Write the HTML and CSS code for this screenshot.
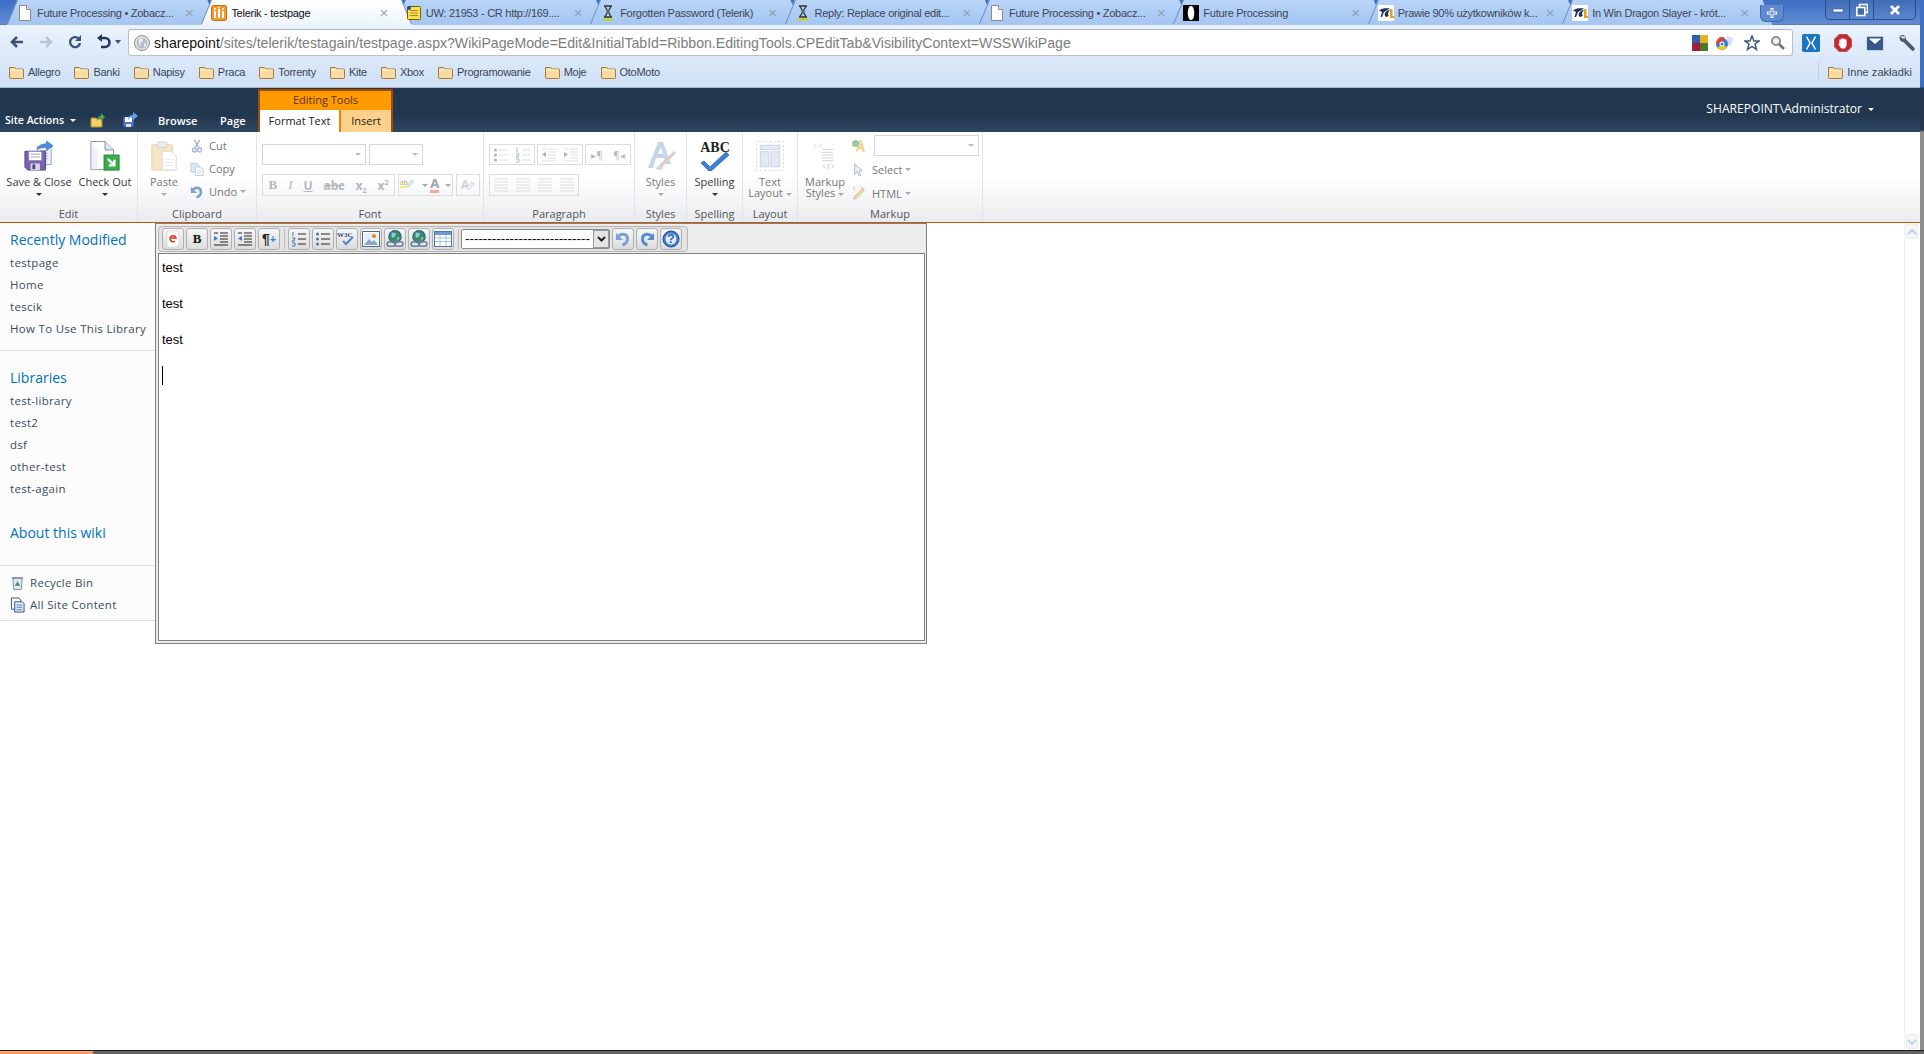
FILE: index.html
```html
<!DOCTYPE html>
<html lang="pl">
<head>
<meta charset="utf-8">
<title>Telerik - testpage</title>
<link rel="stylesheet" href="styles.css">
</head>
<body>
<svg class="defs" aria-hidden="true">
  <symbol id="folder" viewBox="0 0 16 16"><path d="M1.5 3.5h5l1.5 1.5h6.5a1 1 0 0 1 1 1v7.500a1 1 0 0 1-1 1h-12a1 1 0 0 1-1-1z" fill="#f9dba0" stroke="#a57a3e"/><path d="M2 6h12.500" stroke="#fff2d2"/></symbol>
  <symbol id="page" viewBox="0 0 16 16"><path d="M2.500.5h7l4 4v11h-11z" fill="#fff" stroke="#8a8a8a"/><path d="M9.500.5v4h4" fill="#e8e8e8" stroke="#8a8a8a"/></symbol>
  <symbol id="telerik" viewBox="0 0 16 16"><rect x=".5" y=".5" width="15" height="15" rx="2" fill="#f49a2b" stroke="#c96f10"/><path d="M4 6v7M8 4v9M12 6v7" stroke="#fff" stroke-width="2"/><circle cx="4" cy="4" r="1" fill="#fff"/><circle cx="8" cy="2.500" r="1" fill="#fff"/><circle cx="12" cy="4" r="1" fill="#fff"/></symbol>
  <symbol id="note" viewBox="0 0 16 16"><rect x="1.500" y="1.500" width="13" height="13" rx="1" fill="#f8e14a" stroke="#7a5a10"/><path d="M4 5.500h8M4 8h8M4 10.500h8" stroke="#a98b20"/><circle cx="3" cy="3" r="2" fill="#1f4fa0"/></symbol>
  <symbol id="hourglass" viewBox="0 0 16 16"><path d="M4 1h8M4 12h8M5 1.500l6 10M11 1.500l-6 10" stroke="#333" stroke-width="1.300" fill="none"/><path d="M6 6.500l2-2 2 2-2 2z" fill="#666"/><path d="M3 14.500h10" stroke="#c8d400" stroke-width="2"/></symbol>
  <symbol id="halfmoon" viewBox="0 0 16 16"><rect width="16" height="16" fill="#000"/><circle cx="8" cy="8" r="7" fill="#fff"/><path d="M7 1a7 7 0 0 0 0 14c-3-3-3-11 0-14z" fill="#000"/><path d="M9 1a7 7 0 0 1 0 14c3-3 3-11 0-14z" fill="#000"/></symbol>
  <symbol id="pcl" viewBox="0 0 16 16"><rect width="16" height="16" fill="#fff"/><path d="M1 5.500C4 3 8 3 12 3.500L6 7l-2 5H2.500l1.500-5z" fill="#1d3557"/><path d="M7 8c1-2 3-3 5-3l-2 3c0 1 0 2 1 2l-2 2c-2 0-3-2-2-4z" fill="#1d3557"/><path d="M12 4h2.500v7H16v2h-4z" fill="#e8a020"/></symbol>
  <symbol id="globe" viewBox="0 0 16 16"><circle cx="8" cy="8" r="7.500" fill="#e6e6e6" stroke="#8e8e8e"/><circle cx="8" cy="8" r="5.500" fill="#b9bfc6"/><path d="M5 4l3-1 1 3-3 2 1 3-2-1zM10 9l2-1v3l-2 1z" fill="#f0f0f0"/></symbol>
  <symbol id="save" viewBox="0 0 32 32"><rect x="14" y="6" width="15" height="19" fill="#eef3fb" stroke="#8fa6c8"/><path d="M17 10h9M17 13h9M17 16h9M17 19h9" stroke="#9fb4d2"/><path d="M1 11h22v20H4l-3-3z" fill="#7a63ae" stroke="#4f3e85"/><rect x="5" y="11" width="14" height="10" fill="#fff" stroke="#8b7fb5"/><path d="M7 14h10M7 17h10" stroke="#9a9ac0"/><rect x="7" y="24" width="10" height="7" fill="#d8d4e8"/><rect x="9" y="25" width="3" height="5" fill="#4f3e85"/><path d="M14 9c2-5 6-6 10-6V0l7 5-7 5V7c-4 0-7 0-10 2z" fill="#4f8de0" stroke="#2a62b0" stroke-width=".6"/></symbol>
  <symbol id="checkout" viewBox="0 0 32 32"><path d="M1 .5h15l9 9v21H1z" fill="#fff" stroke="#7f8fa8"/><path d="M16 .5v9h9" fill="#dfe6f0" stroke="#7f8fa8"/><path d="M2 2v28h6V10z" fill="#eef2f8"/><rect x="15" y="15" width="16" height="16" fill="#35b04a" stroke="#1f7f30"/><path d="M19 19l7 7m0-6v6h-6" stroke="#fff" stroke-width="2.500" fill="none"/></symbol>
  <symbol id="paste" viewBox="0 0 28 32"><rect x="1" y="4" width="22" height="27" rx="1" fill="#f7e6c6" stroke="#e8d3ab"/><rect x="7" y="1" width="10" height="6" rx="1" fill="#eee" stroke="#cfcfcf"/><path d="M12 11h10l5 5v15H12z" fill="#fff" stroke="#d8d8d8"/><path d="M15 20h9M15 23h9M15 26h9" stroke="#e8e8e8"/></symbol>
  <symbol id="cut" viewBox="0 0 16 16"><path d="M5 1l5 9M11 1L6 10" stroke="#a9b1bd" stroke-width="1.500"/><circle cx="5" cy="12.500" r="2.200" fill="none" stroke="#9db8dc" stroke-width="1.500"/><circle cx="11" cy="12.500" r="2.200" fill="none" stroke="#9db8dc" stroke-width="1.500"/></symbol>
  <symbol id="copy" viewBox="0 0 16 16"><path d="M1 1.500h7l2 2v8H1z" fill="#dfe9f6" stroke="#b5c6dc"/><path d="M6 5.500h6l3 3v7H6z" fill="#fff" stroke="#b5c6dc"/><path d="M8 10h5M8 12.500h5" stroke="#c8d4e4"/></symbol>
  <symbol id="undo" viewBox="0 0 16 16"><path d="M3.500 5c4-3 9-2 9 3 0 3-2 5-5 6" fill="none" stroke="#7aa0d4" stroke-width="3"/><path d="M1 2v7h7z" fill="#7aa0d4"/></symbol>
  <symbol id="redo" viewBox="0 0 16 16"><path d="M12.500 5c-4-3-9-2-9 3 0 3 2 5 5 6" fill="none" stroke="#5b8ad0" stroke-width="3"/><path d="M15 2v7H8z" fill="#5b8ad0"/></symbol>
  <symbol id="styles" viewBox="0 0 32 30"><path d="M3 27L13 1h5l8 22h-5l-2-6h-8l-3 10z" fill="#c5d5ec"/><path d="M13 13h5l-2-7z" fill="#fff"/><path d="M31 12L19 24l-3 5-5-1 5-6 13-12z" fill="#d8cfc0"/><path d="M14 24l4 3-3 2-5-1z" fill="#cfd9e8"/></symbol>
  <symbol id="spell" viewBox="0 0 32 30"><text x="16" y="11" text-anchor="middle" class="abc">ABC</text><path d="M5 20l6 6L27 11l3 3-19 17-9-9z" fill="#3d80d8" stroke="#1f5cae" stroke-width=".7"/></symbol>
  <symbol id="layout" viewBox="0 0 26 28"><rect x=".5" y=".5" width="25" height="27" fill="#fff" stroke="#d5dde8" stroke-dasharray="2 2"/><rect x="4" y="4" width="18" height="4" fill="#e4eaf3" stroke="#cdd7e4"/><rect x="4" y="10" width="8" height="14" fill="#e4eaf3" stroke="#cdd7e4"/><rect x="14" y="10" width="8" height="14" fill="#e4eaf3" stroke="#cdd7e4"/></symbol>
  <symbol id="markup" viewBox="0 0 24 32"><path d="M2 3L0 5l2 2M6 3l2 2-2 2M9 9h12M9 12h12M9 15h12M9 18h12M9 21h12" stroke="#cfd3d9" fill="none"/><path d="M12 25l-2 2 2 2M19 25l2 2-2 2M16.500 24l-2 6" stroke="#c0c5cc" fill="none"/></symbol>
  <symbol id="fonta" viewBox="0 0 16 16"><path d="M4 15L8 1h3l4 14h-3l-1-3H7l-1 3z" fill="#efd999"/><circle cx="4" cy="5" r="4" fill="#9dc3a8"/></symbol>
  <symbol id="cursor" viewBox="0 0 16 16"><path d="M3 1v12l3-3 2 5 2-1-2-5h4z" fill="#eef2f8" stroke="#a8b4c6"/></symbol>
  <symbol id="html" viewBox="0 0 16 16"><path d="M4 1L1 3l3 2M10 1l3 2-3 2" stroke="#c0c5cc" fill="none"/><path d="M14 5L5 14l-3 1 1-3 9-9z" fill="#f2dfa6" stroke="#c8b483"/></symbol>
  <symbol id="orderlist" viewBox="0 0 16 16"><path d="M7 3h8M7 8h8M7 13h8" stroke="currentColor"/><path d="M2 1v4M1 7h3v1l-3 2h3M1 12h3v3H1" stroke="#4a78b8" fill="none"/></symbol>
  <symbol id="bulletlist" viewBox="0 0 16 16"><path d="M6 3h9M6 8h9M6 13h9" stroke="currentColor"/><circle cx="2.500" cy="3" r="1.500" fill="#4a78b8"/><circle cx="2.500" cy="8" r="1.500" fill="#4a78b8"/><circle cx="2.500" cy="13" r="1.500" fill="#4a78b8"/></symbol>
  <symbol id="indent" viewBox="0 0 16 16"><path d="M7 2h8M7 5h8M7 8h8M7 11h8M1 14h14M1 2h4" stroke="currentColor"/><path d="M1 5v5l4-2.500z" fill="#4a78b8"/></symbol>
  <symbol id="outdent" viewBox="0 0 16 16"><path d="M7 2h8M7 5h8M7 8h8M7 11h8M1 14h14M1 2h4" stroke="currentColor"/><path d="M5 5v5L1 7.500z" fill="#4a78b8"/></symbol>
  <symbol id="aligntext" viewBox="0 0 16 16"><path d="M1 2h14M1 5h14M1 8h14M1 11h14M1 14h14" stroke="currentColor"/></symbol>
  <symbol id="globelink" viewBox="0 0 16 16"><circle cx="8" cy="6" r="5.500" fill="#3b8a5a" stroke="#2a5f90"/><path d="M5 2l4 1-1 3-3 1zM10 6l2 1-2 3z" fill="#86c9e8"/><rect x="1" y="10.500" width="7" height="4" rx="2" fill="none" stroke="#6a7f99" stroke-width="1.400"/><rect x="8" y="10.500" width="7" height="4" rx="2" fill="none" stroke="#6a7f99" stroke-width="1.400"/></symbol>
</svg>

<div class="screen">
  <div class="browser">
    <div class="tabstrip">
      <div class="tab"><svg class="fav"><use href="#page"/></svg><span class="tab-title">Future Processing • Zobacz...</span><span class="tab-x">×</span></div>
      <div class="tab active"><svg class="fav"><use href="#telerik"/></svg><span class="tab-title">Telerik - testpage</span><span class="tab-x">×</span></div>
      <div class="tab"><svg class="fav"><use href="#note"/></svg><span class="tab-title">UW: 21953 - CR http://169....</span><span class="tab-x">×</span></div>
      <div class="tab"><svg class="fav"><use href="#hourglass"/></svg><span class="tab-title">Forgotten Password (Telerik)</span><span class="tab-x">×</span></div>
      <div class="tab"><svg class="fav"><use href="#hourglass"/></svg><span class="tab-title">Reply: Replace original edit...</span><span class="tab-x">×</span></div>
      <div class="tab"><svg class="fav"><use href="#page"/></svg><span class="tab-title">Future Processing • Zobacz...</span><span class="tab-x">×</span></div>
      <div class="tab"><svg class="fav"><use href="#halfmoon"/></svg><span class="tab-title">Future Processing</span><span class="tab-x">×</span></div>
      <div class="tab"><svg class="fav"><use href="#pcl"/></svg><span class="tab-title">Prawie 90% użytkowników k...</span><span class="tab-x">×</span></div>
      <div class="tab"><svg class="fav"><use href="#pcl"/></svg><span class="tab-title">In Win Dragon Slayer - krót...</span><span class="tab-x">×</span></div>
      <div class="newtab"><svg width="12" height="12" viewBox="0 0 12 12"><path d="M6 1v10M1 6h10" stroke="#fff" stroke-width="3"/><path d="M6 2v8M2 6h8" stroke="#4a78c0" stroke-width="1"/></svg></div>
      <div class="winctl">
        <span class="win-btn win-min"><svg width="12" height="8" viewBox="0 0 12 8"><rect x="1" y="3" width="10" height="3" fill="#fff" stroke="#33558f" stroke-width=".6"/></svg></span>
        <span class="win-btn win-max"><svg width="12" height="14" viewBox="0 0 12 14"><rect x="3.500" y="1.500" width="8" height="8" fill="none" stroke="#fff" stroke-width="1.600"/><rect x=".8" y="4.500" width="8" height="8" fill="#3f6cb5" stroke="#fff" stroke-width="1.600"/></svg></span>
        <span class="win-btn win-close"><svg width="12" height="12" viewBox="0 0 12 12"><path d="M2 2l8 8M10 2l-8 8" stroke="#fff" stroke-width="2.600"/></svg></span>
      </div>
    </div>

    <div class="toolbar">
      <svg class="nav-ico" viewBox="0 0 16 16"><path d="M14 8H4m4-5L3 8l5 5" fill="none" stroke="#3d5478" stroke-width="2.600"/></svg>
      <svg class="nav-ico" viewBox="0 0 16 16"><path d="M2 8h10M8 3l5 5-5 5" fill="none" stroke="#b8c5d8" stroke-width="2.600"/></svg>
      <svg class="nav-ico" viewBox="0 0 16 16"><path d="M13 9a5 5 0 1 1-1.500-4.500" fill="none" stroke="#3d5478" stroke-width="2.400"/><path d="M14 1v6H8z" fill="#3d5478"/></svg>
      <svg class="nav-ico" viewBox="0 0 16 16"><path d="M4 4h5a4 4 0 0 1 0 9H5" fill="none" stroke="#22385c" stroke-width="2.600"/><path d="M6 0v8L1 4z" fill="#22385c"/></svg>
      <span class="caret-dark"></span>
      <div class="omnibox">
        <svg class="globe-ico"><use href="#globe"/></svg>
        <span class="url"><span class="url-host">sharepoint</span>/sites/telerik/testagain/testpage.aspx?WikiPageMode=Edit&amp;InitialTabId=Ribbon.EditingTools.CPEditTab&amp;VisibilityContext=WSSWikiPage</span>
        <svg class="omni-ico" viewBox="0 0 16 16"><rect width="8" height="8" fill="#2f5fa8"/><rect x="8" width="8" height="8" fill="#eab020"/><rect y="8" width="8" height="8" fill="#a01f3a"/><rect x="8" y="8" width="8" height="8" fill="#4c7a2a"/></svg>
        <svg class="omni-ico omni-wide" viewBox="0 0 20 16"><path d="M13 1l6 2-2 8-5-1z" fill="#cfe0f4"/><circle cx="8" cy="9" r="6" fill="#3a78d0"/><path d="M2 8c1-6 6-7 9-5L7 9z" fill="#d9482e"/><path d="M3 13c3 3 8 3 10-1L8 9z" fill="#e8c030"/><circle cx="8" cy="9" r="2.500" fill="#fff"/><circle cx="8" cy="9" r="1.500" fill="#3a78d0"/></svg>
        <svg class="omni-ico" viewBox="0 0 16 16"><path d="M8 1l2 5h5l-4 3 1.500 5.500L8 11.500 3.500 14.500 5 9 1 6h5z" fill="#fff" stroke="#42597c" stroke-width="1.500"/></svg>
        <svg class="omni-ico" viewBox="0 0 16 16"><circle cx="6" cy="6" r="4" fill="#f4f4f4" stroke="#8a8f96" stroke-width="2"/><path d="M9 9l5 5" stroke="#6d7277" stroke-width="2.500"/></svg>
      </div>
      <svg class="ext-ico" viewBox="0 0 20 20"><rect width="20" height="20" rx="2" fill="#1a74c4"/><path d="M5 3l4 7-4 7M15 3l-4 7 4 7" fill="none" stroke="#fff" stroke-width="1.600"/></svg>
      <svg class="ext-ico" viewBox="0 0 20 20"><path d="M6 0h8l6 6v8l-6 6H6l-6-6V6z" fill="#c9282d" stroke="#8a8f96"/><path d="M6 9V6h2v3-4h2v4-4h2v4-3h2v7l-2 3H8l-3-4z" fill="#fff"/></svg>
      <svg class="ext-ico" viewBox="0 0 20 20"><rect x="1" y="3" width="18" height="15" fill="#37598a"/><path d="M3 5h14l-7 6z" fill="#fff"/></svg>
      <svg class="ext-ico" viewBox="0 0 20 20"><path d="M2 2c4-2 7 0 7 4l9 9a2 2 0 0 1-3 3L6 9C3 9 1 6 2 2l3 3h3V3z" fill="#4d5d74"/></svg>
    </div>

    <div class="bookmarks">
      <span class="bm"><svg class="folder"><use href="#folder"/></svg>Allegro</span>
      <span class="bm"><svg class="folder"><use href="#folder"/></svg>Banki</span>
      <span class="bm"><svg class="folder"><use href="#folder"/></svg>Napisy</span>
      <span class="bm"><svg class="folder"><use href="#folder"/></svg>Praca</span>
      <span class="bm"><svg class="folder"><use href="#folder"/></svg>Torrenty</span>
      <span class="bm"><svg class="folder"><use href="#folder"/></svg>Kite</span>
      <span class="bm"><svg class="folder"><use href="#folder"/></svg>Xbox</span>
      <span class="bm"><svg class="folder"><use href="#folder"/></svg>Programowanie</span>
      <span class="bm"><svg class="folder"><use href="#folder"/></svg>Moje</span>
      <span class="bm"><svg class="folder"><use href="#folder"/></svg>OtoMoto</span>
      <span class="bm bm-other"><svg class="folder"><use href="#folder"/></svg>Inne zakładki</span>
    </div>

    <div class="topbar">
      <span class="site-actions">Site Actions<i class="caret-white"></i></span>
      <svg class="top-ico" viewBox="0 0 16 16"><path d="M1 6h5l1 1h5v8H1z" fill="#f2cf68" stroke="#a98a30"/><path d="M7 9c0-4 2-5 4-5V1l4 4-4 4V6c-2 0-3 1-4 3z" fill="#4da64a"/></svg>
      <svg class="top-ico ico2" viewBox="0 0 16 16"><path d="M1 5h11v10H1z" fill="#5a6fd0" stroke="#2f3f98"/><rect x="3" y="5" width="7" height="5" fill="#fff"/><rect x="4" y="12" width="5" height="3" fill="#dfe4f8"/><path d="M6 8c0-4 3-5 5-5V0l5 4-5 4V5c-2 0-4 1-5 3z" fill="#5ba3e8"/></svg>
      <span class="toptab tab-browse">Browse</span>
      <span class="toptab tab-page">Page</span>
      <div class="ctx">
        <div class="ctx-head">Editing Tools</div>
        <div class="ctx-tabs"><span class="ctx-format">Format Text</span><span class="ctx-insert">Insert</span></div>
      </div>
      <span class="user">SHAREPOINT\Administrator<i class="caret-white"></i></span>
    </div>

    <div class="ribbon">
      <section class="group g-edit">
        <div class="g-body">
          <div class="large lg-save"><svg class="lg-ico i32"><use href="#save"/></svg><span class="lg-text">Save &amp; Close</span><i class="caret"></i></div>
          <div class="large lg-check"><svg class="lg-ico i32"><use href="#checkout"/></svg><span class="lg-text">Check Out</span><i class="caret"></i></div>
        </div>
        <div class="g-label">Edit</div>
      </section>
      <section class="group g-clip">
        <div class="g-body">
          <div class="large lg-paste off"><svg class="lg-ico i28"><use href="#paste"/></svg><span class="lg-text">Paste</span><i class="caret"></i></div>
          <div class="smalls off">
            <div class="small"><svg class="sm-ico"><use href="#cut"/></svg>Cut</div>
            <div class="small"><svg class="sm-ico"><use href="#copy"/></svg>Copy</div>
            <div class="small"><svg class="sm-ico"><use href="#undo"/></svg>Undo<i class="caret sm-caret"></i></div>
          </div>
        </div>
        <div class="g-label">Clipboard</div>
      </section>
      <section class="group g-font">
        <div class="g-body rows">
          <div class="row">
            <div class="combo cb-font"><i class="caret"></i></div>
            <div class="combo cb-size"><i class="caret"></i></div>
          </div>
          <div class="row">
            <div class="btns b-format">
              <b class="fb serif">B</b><i class="fb serif">I</i><u class="fb">U</u><s class="fb">abc</s><span class="fb">x<sub>2</sub></span><span class="fb">x<sup>2</sup></span>
            </div>
            <div class="btns b-color">
              <svg class="tool" viewBox="0 0 22 18"><text x="0" y="9" class="mini">ab</text><path d="M16 2l3 2-6 7-3 1 1-3z" fill="#eef2f8" stroke="#b5c0d0"/><rect y="11" width="9" height="2" fill="#f1e84a"/></svg><i class="caret sm-caret"></i>
              <span class="colora">A</span><i class="caret sm-caret"></i>
            </div>
            <div class="btns b-clear"><svg class="tool" viewBox="0 0 18 18"><text x="1" y="13" class="letter">A</text><path d="M16 8l-6 6-3-2 6-6z" fill="#f4f4f4" stroke="#c5ccd8"/></svg></div>
          </div>
        </div>
        <div class="g-label">Font</div>
      </section>
      <section class="group g-para">
        <div class="g-body rows">
          <div class="row">
            <div class="btns b-list"><svg class="tool"><use href="#bulletlist"/></svg><svg class="tool"><use href="#orderlist"/></svg></div>
            <div class="btns b-list"><svg class="tool"><use href="#outdent"/></svg><svg class="tool"><use href="#indent"/></svg></div>
            <div class="btns b-list"><span class="pil">▸¶</span><span class="pil">¶◂</span></div>
          </div>
          <div class="row">
            <div class="btns b-align"><svg class="tool"><use href="#aligntext"/></svg><svg class="tool"><use href="#aligntext"/></svg><svg class="tool"><use href="#aligntext"/></svg><svg class="tool"><use href="#aligntext"/></svg></div>
          </div>
        </div>
        <div class="g-label">Paragraph</div>
      </section>
      <section class="group g-styles">
        <div class="g-body"><div class="large lg-full off"><svg class="lg-ico i32"><use href="#styles"/></svg><span class="lg-text">Styles</span><i class="caret"></i></div></div>
        <div class="g-label">Styles</div>
      </section>
      <section class="group g-spell">
        <div class="g-body"><div class="large lg-full"><svg class="lg-ico i32"><use href="#spell"/></svg><span class="lg-text">Spelling</span><i class="caret"></i></div></div>
        <div class="g-label">Spelling</div>
      </section>
      <section class="group g-layout">
        <div class="g-body"><div class="large lg-full off"><svg class="lg-ico i28"><use href="#layout"/></svg><span class="lg-text two">Text<br>Layout<i class="caret sm-caret"></i></span></div></div>
        <div class="g-label">Layout</div>
      </section>
      <section class="group g-markup">
        <div class="g-body">
          <div class="large lg-markup off"><svg class="lg-ico i28"><use href="#markup"/></svg><span class="lg-text two">Markup<br>Styles<i class="caret sm-caret"></i></span></div>
          <div class="smalls mk off">
            <div class="small"><svg class="sm-ico"><use href="#fonta"/></svg><div class="combo cb-lang"><i class="caret"></i></div></div>
            <div class="small"><svg class="sm-ico"><use href="#cursor"/></svg>Select<i class="caret sm-caret"></i></div>
            <div class="small"><svg class="sm-ico"><use href="#html"/></svg>HTML<i class="caret sm-caret"></i></div>
          </div>
        </div>
        <div class="g-label">Markup</div>
      </section>
    </div>

    <div class="content">
      <nav class="nav">
        <div class="nav-sec sec-recent">
          <a class="nav-head">Recently Modified</a>
          <a class="nav-item">testpage</a><a class="nav-item">Home</a><a class="nav-item">tescik</a><a class="nav-item">How To Use This Library</a>
        </div>
        <div class="nav-sec sec-libs">
          <a class="nav-head">Libraries</a>
          <a class="nav-item">test-library</a><a class="nav-item">test2</a><a class="nav-item">dsf</a><a class="nav-item">other-test</a><a class="nav-item">test-again</a>
          <a class="nav-head about">About this wiki</a>
        </div>
        <div class="nav-sec sec-tools">
          <a class="nav-item tool-link"><svg class="nav-svg" viewBox="0 0 16 16"><path d="M3 3h10l-1 12H4z" fill="#dfe8f2" stroke="#7d8ea3"/><path d="M2 2.500h12" stroke="#7d8ea3" stroke-width="1.500"/><path d="M8 6l3 5H5z" fill="#4f8f55"/></svg>Recycle Bin</a>
          <a class="nav-item tool-link"><svg class="nav-svg" viewBox="0 0 16 16"><path d="M1.500 .5h8l2 2v10h-10z" fill="#fff" stroke="#34527a"/><path d="M5 4.500h8l2 2v9H5z" fill="#dbe7f6" stroke="#34527a"/><path d="M7 8h6M7 10.500h6M7 13h6" stroke="#5f86bb"/></svg>All Site Content</a>
        </div>
      </nav>
      <main class="main">
        <div class="editor">
          <div class="ed-toolbar">
            <div class="ed-tools">
              <span class="ebtn"><svg width="16" height="18" viewBox="0 0 16 18"><path d="M2 1h12v13l-3 3H2z" fill="#fff" stroke="#ddd"/><path d="M5 8h6a3 3 0 1 0-1 3" fill="none" stroke="#e23a1e" stroke-width="1.600"/></svg></span>
              <b class="ebtn ebold">B</b>
              <span class="ebtn"><svg class="ei dark"><use href="#indent"/></svg></span>
              <span class="ebtn"><svg class="ei dark"><use href="#outdent"/></svg></span>
              <span class="ebtn epara">¶<em>+</em></span>
              <i class="esep"></i>
              <span class="ebtn"><svg class="ei dark"><use href="#orderlist"/></svg></span>
              <span class="ebtn"><svg class="ei dark"><use href="#bulletlist"/></svg></span>
              <span class="ebtn"><svg width="20" height="18" viewBox="0 0 20 18"><text x="0" y="7" class="w3c">W3C</text><path d="M6 11l3 3 7-7" fill="none" stroke="#4d86c9" stroke-width="2"/></svg></span>
              <span class="ebtn"><svg width="18" height="16" viewBox="0 0 18 16"><rect x=".5" y=".5" width="17" height="15" fill="#fff" stroke="#49699a"/><rect x="2" y="2" width="14" height="12" fill="#e6eef8"/><path d="M2 14l5-6 3 3 2-2 4 5z" fill="#8ba6c8"/><circle cx="12" cy="5" r="2" fill="#e8842a"/></svg></span>
              <span class="ebtn"><svg class="ei lg"><use href="#globelink"/></svg></span>
              <span class="ebtn"><svg class="ei lg"><use href="#globelink"/></svg></span>
              <span class="ebtn"><svg width="18" height="16" viewBox="0 0 18 16"><rect x=".5" y=".5" width="17" height="15" fill="#fff" stroke="#4f78ad"/><rect x="1" y="1" width="16" height="3" fill="#6c9ad0"/><path d="M1 7h16M1 10.500h16M6 4v11M12 4v11" stroke="#a9c2e0"/></svg></span>
              <i class="esep"></i>
              <div class="eselect"><span class="eselect-val">----------------------------</span><span class="eselect-btn"><svg width="9" height="6" viewBox="0 0 9 6"><path d="M1 1l3.500 3.500L8 1" fill="none" stroke="#222" stroke-width="2"/></svg></span></div>
              <span class="ebtn"><svg class="ei md"><use href="#undo"/></svg></span>
              <span class="ebtn"><svg class="ei md"><use href="#redo"/></svg></span>
              <span class="ebtn"><svg width="18" height="18" viewBox="0 0 18 18"><circle cx="9" cy="9" r="8" fill="#3d7fd6" stroke="#214f98"/><circle cx="9" cy="9" r="5.500" fill="#dfeafa"/><text x="9" y="13" class="help">?</text></svg></span>
            </div>
          </div>
          <div class="ed-area">
            <p class="ed-p">test</p>
            <p class="ed-p">test</p>
            <p class="ed-p">test</p>
            <i class="ed-cursor"></i>
          </div>
        </div>
      </main>
      <aside class="scroll">
        <span class="sb-btn"><svg width="10" height="6" viewBox="0 0 10 6"><path d="M1 5l4-4 4 4" fill="none" stroke="#bcd2ec" stroke-width="2"/></svg></span>
        <span class="sb-btn"><svg width="10" height="6" viewBox="0 0 10 6"><path d="M1 1l4 4 4-4" fill="none" stroke="#bcd2ec" stroke-width="2"/></svg></span>
      </aside>
    </div>
  </div>
  <div class="edge"></div>
</div>
<div class="taskbar"><div class="start"></div></div>
</body>
</html>
```
FILE: styles.css
```css
* { box-sizing: border-box; }
html, body { margin: 0; padding: 0; height: 100%; overflow: hidden; background: #fff; }
body { font-family: "Open Sans", sans-serif; font-size: 11px; color: #333; display: flex; flex-direction: column; }
.defs { position: absolute; width: 0; height: 0; }
a { display: block; }

.screen { display: flex; height: 1050px; }
.browser { width: 1920px; display: flex; flex-direction: column; height: 1050px; }
.edge { width: 4px; background: linear-gradient(#3f6fc0 0, #3f6fc0 87px, #26384f 88px, #26384f 130px, #8f8f8f 132px); }
.taskbar { height: 4px; background: #646464; border-top: 1px solid #1c1c1c; }
.start { width: 93px; height: 3px; background: linear-gradient(#ffb27d, #f08a4a); }

/* tabs */
.tabstrip { height: 25px; display: flex; padding-left: 8px; background: linear-gradient(#3e6ec2, #5f8bd4); border-bottom: 1px solid #5b7fb4; position: relative; }
.tab { position: relative; width: 194.4px; flex: none; height: 24px; padding: 1px 0 0 9px; display: flex; align-items: center; font: 11px "Liberation Sans", sans-serif; letter-spacing: -.27px; color: #3c4657; }
.tab::before { content: ""; position: absolute; top: 0; bottom: -1px; left: -1px; right: -15px; z-index: 0; background: linear-gradient(#b9d4f7, #a4c6f1); clip-path: polygon(0 100%, 10px 0, calc(100% - 10px) 0, 100% 100%); }
.tab::after { content: ""; position: absolute; top: 0; bottom: 0; left: 4px; width: 1px; background: #6c8cba; transform: skewX(-22.6deg); z-index: 1; }
.tab.active::before { background: linear-gradient(#fff, #eef4fd); z-index: 1; }
.tab.active + .tab::after { display: none; }
.tab.active { color: #111; }
.tab > * { position: relative; z-index: 2; }
.tab.active .tab-x { position: static; }
.tab.active .tab-x::after { content: ""; position: absolute; top: 0; bottom: 0; left: calc(100% + 9px); width: 1px; background: #6c8cba; transform: skewX(22.6deg); z-index: 2; }
.fav { width: 16px; height: 16px; flex: none; }
.tab-title { margin-left: 4px; width: 146px; white-space: nowrap; overflow: hidden; }
.tab-x { margin-left: 2px; font-size: 15px; letter-spacing: 0; line-height: 1; color: #8aa0bd; }
.tab.active .tab-x { color: #a2a8b0; }
.newtab { width: 24px; height: 17px; margin: 5px 0 0 2px; flex: none; display: flex; align-items: center; justify-content: center; background: #5f8ad2; border: 1px solid #3f68ad; border-top: 0; border-radius: 0 0 6px 6px; position: relative; z-index: 2; }
.winctl { margin-left: auto; margin-right: 4px; width: 91px; height: 20px; display: flex; border: 1px solid #2b4f8c; border-top: 0; border-radius: 0 0 5px 5px; background: linear-gradient(#3f6cb5, #5a86cf); }
.win-btn { display: flex; align-items: center; justify-content: center; }
.win-min { width: 24px; border-right: 1px solid #2b4f8c; }
.win-max { width: 24px; border-right: 1px solid #2b4f8c; }
.win-close { flex: 1; }

/* toolbar */
.toolbar { height: 31px; display: flex; align-items: flex-start; background: linear-gradient(#eaf2fd, #dde9f9); padding: 4px 8px 0 9px; }
.nav-ico { width: 16px; height: 16px; flex: none; margin: 5px 13px 0 0; }
.caret-dark { width: 0; height: 0; border: 3.5px solid transparent; border-top: 4px solid #3d5478; border-bottom: 0; margin: 11px 0 0 -10px; flex: none; }
.omnibox { flex: none; width: 1665px; height: 27px; margin-left: 7px; background: #fff; border: 1px solid #b9c1cc; border-top-color: #aeb6c2; border-radius: 3px; display: flex; align-items: center; padding: 0 6px 0 5px; }
.globe-ico { width: 16px; height: 16px; flex: none; }
.url { margin-left: 4px; flex: 1; font: 14.1px "Liberation Sans", sans-serif; color: #7d7d7d; white-space: nowrap; overflow: hidden; }
.url-host { color: #111; }
.omni-ico { width: 16px; height: 16px; flex: none; margin-left: 10px; }
.omni-wide { width: 20px; margin-left: 6px; }
.ext-ico { width: 18px; height: 18px; flex: none; margin: 5px 0 0 14px; }
.omnibox + .ext-ico { margin-left: 9px; }

/* bookmarks */
.bookmarks { height: 32px; display: flex; align-items: center; padding: 1px 0 0 8px; gap: 13.1px; background: linear-gradient(#dbe8f9, #d0e1f6); border-bottom: 1px solid #adb6c2; font: 11px "Liberation Sans", sans-serif; letter-spacing: -.27px; color: #3a4556; }
.bm { display: flex; align-items: center; white-space: nowrap; }
.folder { width: 16px; height: 16px; margin-right: 4px; flex: none; }
.bm-other { margin-left: auto; margin-right: 8px; padding-left: 8px; border-left: 1px solid #c3cfdd; height: 20px; letter-spacing: .05px; }

/* dark top bar */
.topbar { height: 44px; display: flex; align-items: flex-end; background: linear-gradient(#21374f 60%, #2f4660); color: #fff; padding-left: 5px; }
.site-actions { font-weight: 600; font-size: 10.5px; width: 73px; flex: none; margin-bottom: 5px; white-space: nowrap; }
.caret-white { display: inline-block; width: 0; height: 0; border: 3px solid transparent; border-top: 3px solid #fff; border-bottom: 0; margin-left: 6px; vertical-align: 2px; }
.top-ico { width: 16px; height: 16px; flex: none; margin: 0 0 4px 12px; }
.ico2 { margin-left: 16px; }
.toptab { font-weight: 600; flex: none; height: 20px; line-height: 20px; margin-bottom: 1px; }
.tab-browse { margin-left: 20px; width: 62px; }
.tab-page { width: 38px; }
.ctx { width: 135px; height: 43px; flex: none; display: flex; flex-direction: column; background: #e88400; border: 2px solid #a04b08; border-bottom: 0; }
.ctx-head { height: 19px; line-height: 17px; text-align: center; background: #ff9a00; color: #5a3200; }
.ctx-tabs { flex: 1; display: flex; line-height: 22px; text-align: center; color: #222; }
.ctx-format { width: 79px; background: #fff; }
.ctx-insert { flex: 1; margin-left: 2px; background: #ffd08c; }
.user { margin: 0 46px 15px auto; font-size: 12.1px; white-space: nowrap; align-self: flex-end; }

/* ribbon */
.ribbon { height: 91px; flex: none; display: flex; background: linear-gradient(#fff 50%, #e9ebee); border-bottom: 1px solid #c15a00; }
.group { display: flex; flex-direction: column; border-right: 1px solid #e2e4e7; flex: none; }
.g-edit { width: 138px; }
.g-clip { width: 119px; }
.g-font { width: 227px; }
.g-para { width: 151px; }
.g-styles { width: 52px; }
.g-spell { width: 56px; }
.g-layout { width: 55px; }
.g-markup { width: 185px; }
.g-body { height: 73px; flex: none; display: flex; }
.g-label { height: 17px; line-height: 17px; text-align: center; color: #555; flex: none; }
.large { display: flex; flex-direction: column; align-items: center; padding-top: 9px; flex: none; }
.lg-ico { flex: none; }
.i32 { width: 32px; height: 30px; }
.i28 { width: 28px; height: 30px; }
.lg-text { margin-top: 5px; line-height: 12px; color: #3a3a3a; white-space: nowrap; text-align: center; }
.lg-text.two { line-height: 10.5px; margin-top: 6px; }
.off .lg-text, .off.smalls { color: #777; }
.caret { display: block; width: 0; height: 0; border: 3px solid transparent; border-top: 3px solid #333; border-bottom: 0; margin-top: 5px; flex: none; }
.off .caret { border-top-color: #aaa; }
.sm-caret { display: inline-block; margin: 0 0 0 3px; vertical-align: 1px; border-top-color: #aaa; }
.lg-save { width: 70px; margin-left: 4px; }
.lg-check { width: 62px; }
.lg-paste { width: 52px; }
.lg-full { width: 100%; }
.lg-markup { width: 54px; }
.smalls { display: flex; flex-direction: column; margin-top: 2px; }
.small { height: 23px; display: flex; align-items: center; white-space: nowrap; }
.sm-ico { width: 14px; height: 14px; flex: none; margin-right: 5px; }
.mk .sm-ico { margin-right: 6px; }
.mk .small { height: 24px; }
.combo { height: 21px; border: 1px solid #d6d6d6; background: #fff; position: relative; display: flex; align-items: center; justify-content: flex-end; padding-right: 4px; }
.combo .caret { margin: 0; border-top-color: #bbb; }
.cb-font { width: 104px; }
.cb-size { width: 54px; }
.cb-lang { width: 105px; margin-left: 2px; }
.rows { flex-direction: column; padding: 12px 0 0 5px; gap: 9px; }
.row { display: flex; gap: 3px; }
.btns { height: 22px; border: 1px solid #dcdcdc; display: flex; align-items: center; justify-content: space-around; color: #bfc3c8; }
.b-format { width: 133px; }
.b-color { width: 55px; }
.b-clear { width: 24px; }
.b-list { width: 46px; height: 21px; }
.b-align { width: 90px; }
.g-para .row { gap: 2px; }
.g-para .tool { opacity: .55; }
.fb { font-size: 12px; font-weight: 700; text-decoration-thickness: 1px; color: #b4b8bd; }
.fb sub, .fb sup { font-size: 7px; line-height: 0; }
.serif { font-family: "Liberation Serif", serif; font-size: 13px; }
i.serif { font-weight: 400; }
.tool { width: 16px; height: 16px; color: #bfc3c8; flex: none; }
.mini { font: 9px "Open Sans", sans-serif; fill: #b0a040; }
.letter { font: 700 13px "Open Sans", sans-serif; fill: #c7d4e6; }
.pil { font-size: 10px; line-height: 1; color: #b8bcc2; }
.colora { font-weight: 700; font-size: 13px; color: #9aa2ad; border-bottom: 3px solid #f3a99a; line-height: 13px; }
.abc { font: 700 14px "Liberation Serif", serif; fill: #222; }

/* content */
.content { flex: 1; display: flex; min-height: 0; }
.nav { width: 155px; flex: none; color: #3b4c60; }
.nav-sec { background: #fcfcfc; border-bottom: 1px solid #dfdfdf; padding-left: 10px; }
.sec-recent { padding-top: 7px; padding-bottom: 10px; }
.sec-libs { padding-top: 17px; padding-bottom: 22px; }
.sec-tools { padding-top: 6px; padding-bottom: 4px; }
.nav-head { height: 20px; margin-bottom: 2px; line-height: 20px; font-size: 14px; color: #0072bc; white-space: nowrap; }
.nav-head.about { margin: 23px 0 0; }
.nav-item { height: 22px; line-height: 22px; font-size: 11.5px; letter-spacing: .3px; white-space: nowrap; }
.tool-link { display: flex; align-items: center; }
.nav-svg { width: 15px; height: 16px; flex: none; margin-right: 5px; }

.main { flex: 1; min-width: 0; }
.editor { width: 772px; height: 421px; border: 1px solid #808080; background: #ececec; display: flex; flex-direction: column; padding: 0 1px 2px 2px; }
.ed-toolbar { height: 29px; flex: none; padding-top: 2px; }
.ed-tools { height: 26px; width: 530px; display: flex; align-items: center; gap: 2px; border: 1px solid #b5b5b5; border-radius: 4px; padding-left: 3px; background: #e4e4e4; }
.ebtn { width: 22px; height: 22px; flex: none; display: flex; align-items: center; justify-content: center; border: 1px solid #b0b0b0; border-radius: 3px; background: linear-gradient(#f6f6f6, #dcdcdc); }
.ebold { font: 700 13px "Liberation Serif", serif; color: #111; }
.epara { font: 700 14px "Liberation Sans", sans-serif; color: #222; }
.epara em { color: #3d7fd6; font-style: normal; font-size: 11px; }
.esep { width: 1px; height: 20px; background: #bbb; margin: 0 1.5px; flex: none; }
.ei { width: 16px; height: 16px; }
.ei.dark { color: #222; }
.ei.lg { width: 18px; height: 18px; }
.w3c { font: 700 7px "Liberation Serif", serif; fill: #2b4a80; }
.help { font: 700 12px "Liberation Sans", sans-serif; fill: #2b62b8; text-anchor: middle; }
.eselect { width: 149px; height: 20px; flex: none; display: flex; background: #fff; border: 1px solid #8a8a8a; border-radius: 2px; margin-left: -1px; }
.eselect-val { flex: 1; font: 13.4px "Liberation Sans", sans-serif; color: #000; padding-left: 3px; line-height: 17px; overflow: hidden; white-space: nowrap; }
.eselect-btn { width: 16px; flex: none; display: flex; align-items: center; justify-content: center; border: 1px solid #999; background: #e4e4e4; }
.ed-area { flex: 1; background: #fff; border: 1px solid #808080; padding: 6px 0 0 3px; }
.ed-p { margin: 0 0 21px; font: 13px/15px "Liberation Sans", sans-serif; color: #000; }
.ed-cursor { display: block; width: 1px; height: 19px; background: #000; margin-top: -2px; }

.scroll { width: 16px; flex: none; display: flex; flex-direction: column; justify-content: space-between; padding: 1px 2px 1px 1px; background: #fff; border-left: 1px solid #f0f0f0; }
.sb-btn { height: 15px; display: flex; align-items: center; justify-content: center; background: #f6f6f6; border: 1px solid #ececec; border-radius: 2px; }
```
